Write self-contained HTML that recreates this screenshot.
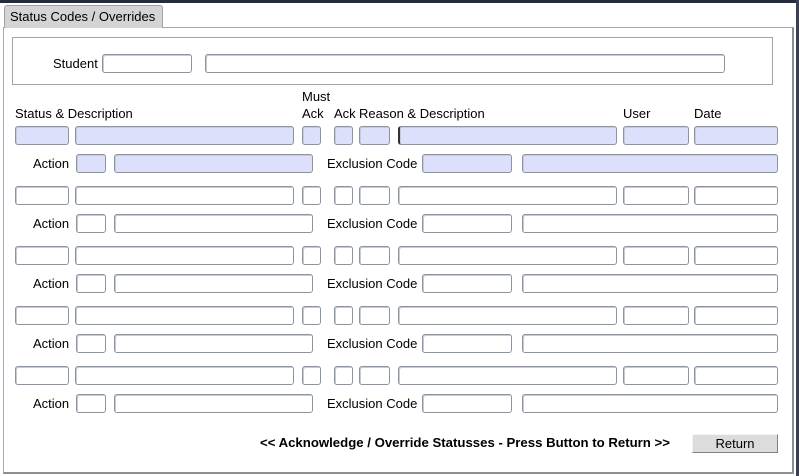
<!DOCTYPE html>
<html><head><style>
body{margin:0;width:799px;height:476px;background:#fff;position:relative;overflow:hidden;font-family:"Liberation Sans",Arial,sans-serif;font-size:13px;color:#000}
div{position:absolute;box-sizing:border-box}
.f{height:19px;border:1px solid #8a94a2;border-radius:3px;background:#fff;box-shadow:inset 1px 1px 0 #c8ccd2}
.b{background:#dde0fb}
.l{white-space:nowrap;line-height:14px}
</style></head><body>
<div style="left:0;top:0;width:799px;height:3px;background:#232c40"></div>
<div style="left:796px;top:0;width:3px;height:476px;background:#3a4050"></div>
<div style="left:3px;top:27px;width:791px;height:447px;border:1px solid #a8acb2;border-right:2px solid #8a8e96;border-bottom:2px solid #8a8e96"></div>
<div style="left:4px;top:5px;width:159px;height:23px;background:#d4d4d4;border:1px solid #a0a0a0;border-bottom:none;border-radius:3px 3px 0 0"></div>
<div class="l" style="left:10px;top:10px">Status Codes / Overrides</div>
<div style="left:12px;top:37px;width:761px;height:48px;border:1px solid #a0a4aa"></div>
<div class="l" style="left:53px;top:57px">Student</div>
<div class="f" style="left:102px;top:54px;width:90px"></div>
<div class="f" style="left:205px;top:54px;width:520px"></div>
<div class="l" style="left:302px;top:90px">Must</div>
<div class="l" style="left:15px;top:107px">Status &amp; Description</div>
<div class="l" style="left:302px;top:107px">Ack</div>
<div class="l" style="left:334px;top:107px">Ack</div>
<div class="l" style="left:359px;top:107px">Reason &amp; Description</div>
<div class="l" style="left:623px;top:107px">User</div>
<div class="l" style="left:694px;top:107px">Date</div>

<!-- row 1 -->
<div class="f b" style="left:15px;top:126px;width:54px"></div>
<div class="f b" style="left:75px;top:126px;width:219px"></div>
<div class="f b" style="left:302px;top:126px;width:19px"></div>
<div class="f b" style="left:334px;top:126px;width:19px"></div>
<div class="f b" style="left:359px;top:126px;width:31px"></div>
<div class="f b" style="left:398px;top:126px;width:219px;border-left:2px solid #333"></div>
<div class="f b" style="left:623px;top:126px;width:66px"></div>
<div class="f b" style="left:694px;top:126px;width:84px"></div>
<div class="l" style="left:33px;top:157px">Action</div>
<div class="f b" style="left:76px;top:154px;width:30px"></div>
<div class="f b" style="left:114px;top:154px;width:199px"></div>
<div class="l" style="left:327px;top:157px">Exclusion Code</div>
<div class="f b" style="left:422px;top:154px;width:90px"></div>
<div class="f b" style="left:522px;top:154px;width:256px"></div>

<!-- row 2 -->
<div class="f" style="left:15px;top:186px;width:54px"></div>
<div class="f" style="left:75px;top:186px;width:219px"></div>
<div class="f" style="left:302px;top:186px;width:19px"></div>
<div class="f" style="left:334px;top:186px;width:19px"></div>
<div class="f" style="left:359px;top:186px;width:31px"></div>
<div class="f" style="left:398px;top:186px;width:219px"></div>
<div class="f" style="left:623px;top:186px;width:66px"></div>
<div class="f" style="left:694px;top:186px;width:84px"></div>
<div class="l" style="left:33px;top:217px">Action</div>
<div class="f" style="left:76px;top:214px;width:30px"></div>
<div class="f" style="left:114px;top:214px;width:199px"></div>
<div class="l" style="left:327px;top:217px">Exclusion Code</div>
<div class="f" style="left:422px;top:214px;width:90px"></div>
<div class="f" style="left:522px;top:214px;width:256px"></div>

<!-- row 3 -->
<div class="f" style="left:15px;top:246px;width:54px"></div>
<div class="f" style="left:75px;top:246px;width:219px"></div>
<div class="f" style="left:302px;top:246px;width:19px"></div>
<div class="f" style="left:334px;top:246px;width:19px"></div>
<div class="f" style="left:359px;top:246px;width:31px"></div>
<div class="f" style="left:398px;top:246px;width:219px"></div>
<div class="f" style="left:623px;top:246px;width:66px"></div>
<div class="f" style="left:694px;top:246px;width:84px"></div>
<div class="l" style="left:33px;top:277px">Action</div>
<div class="f" style="left:76px;top:274px;width:30px"></div>
<div class="f" style="left:114px;top:274px;width:199px"></div>
<div class="l" style="left:327px;top:277px">Exclusion Code</div>
<div class="f" style="left:422px;top:274px;width:90px"></div>
<div class="f" style="left:522px;top:274px;width:256px"></div>

<!-- row 4 -->
<div class="f" style="left:15px;top:306px;width:54px"></div>
<div class="f" style="left:75px;top:306px;width:219px"></div>
<div class="f" style="left:302px;top:306px;width:19px"></div>
<div class="f" style="left:334px;top:306px;width:19px"></div>
<div class="f" style="left:359px;top:306px;width:31px"></div>
<div class="f" style="left:398px;top:306px;width:219px"></div>
<div class="f" style="left:623px;top:306px;width:66px"></div>
<div class="f" style="left:694px;top:306px;width:84px"></div>
<div class="l" style="left:33px;top:337px">Action</div>
<div class="f" style="left:76px;top:334px;width:30px"></div>
<div class="f" style="left:114px;top:334px;width:199px"></div>
<div class="l" style="left:327px;top:337px">Exclusion Code</div>
<div class="f" style="left:422px;top:334px;width:90px"></div>
<div class="f" style="left:522px;top:334px;width:256px"></div>

<!-- row 5 -->
<div class="f" style="left:15px;top:366px;width:54px"></div>
<div class="f" style="left:75px;top:366px;width:219px"></div>
<div class="f" style="left:302px;top:366px;width:19px"></div>
<div class="f" style="left:334px;top:366px;width:19px"></div>
<div class="f" style="left:359px;top:366px;width:31px"></div>
<div class="f" style="left:398px;top:366px;width:219px"></div>
<div class="f" style="left:623px;top:366px;width:66px"></div>
<div class="f" style="left:694px;top:366px;width:84px"></div>
<div class="l" style="left:33px;top:397px">Action</div>
<div class="f" style="left:76px;top:394px;width:30px"></div>
<div class="f" style="left:114px;top:394px;width:199px"></div>
<div class="l" style="left:327px;top:397px">Exclusion Code</div>
<div class="f" style="left:422px;top:394px;width:90px"></div>
<div class="f" style="left:522px;top:394px;width:256px"></div>

<div class="l" style="left:260px;top:436px;font-weight:bold;font-size:13.2px">&lt;&lt; Acknowledge / Override Statusses - Press Button to Return &gt;&gt;</div>
<div style="left:692px;top:434px;width:86px;height:19px;background:#dcdcdc;border:1px solid;border-color:#f4f4f4 #808080 #808080 #f4f4f4;text-align:center;line-height:17px">Return</div>
</body></html>
